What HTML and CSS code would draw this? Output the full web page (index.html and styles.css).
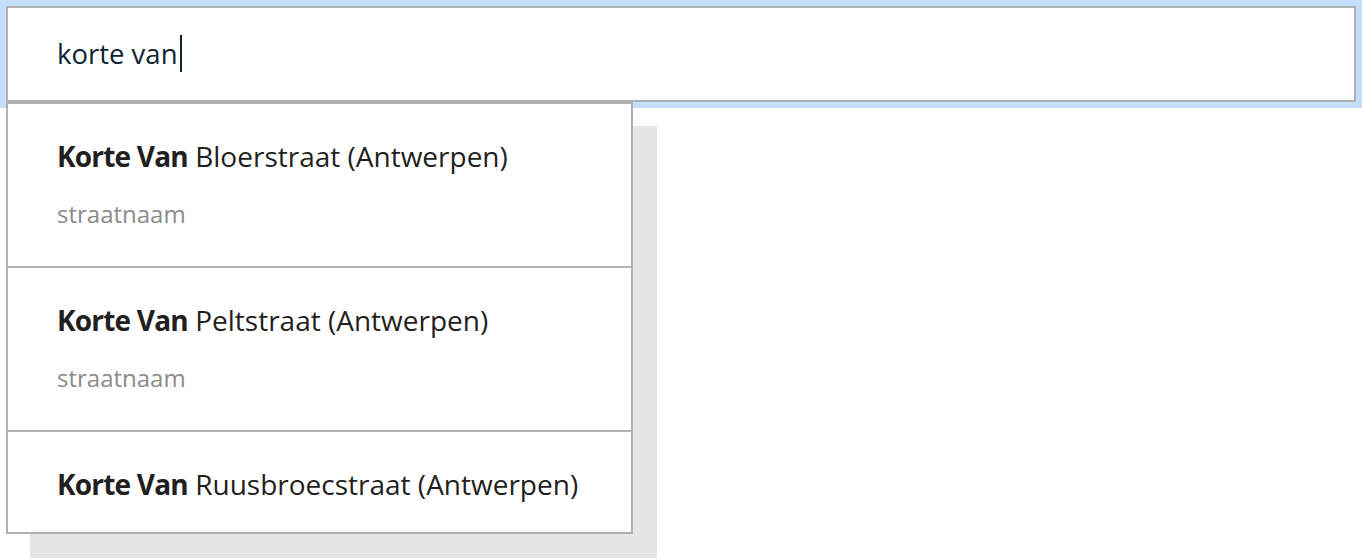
FILE: index.html
```html
<!DOCTYPE html>
<html lang="nl">
<head>
<meta charset="utf-8">
<title>Zoeken</title>
<link rel="stylesheet" href="styles.css">
</head>
<body>
<div class="page">
  <div class="search">
    <div class="field" role="textbox" aria-label="Zoek een straat">
      <span class="value">korte van</span><span class="caret"></span>
    </div>
    <ul class="suggestions" role="listbox">
      <li class="option">
        <div class="title"><strong>Korte Van</strong> Bloerstraat (Antwerpen)</div>
        <div class="type">straatnaam</div>
      </li>
      <li class="option">
        <div class="title"><strong>Korte Van</strong> Peltstraat (Antwerpen)</div>
        <div class="type">straatnaam</div>
      </li>
      <li class="option">
        <div class="title"><strong>Korte Van</strong> Ruusbroecstraat (Antwerpen)</div>
      </li>
    </ul>
  </div>
</div>
</body>
</html>
```
FILE: styles.css
```css
html, body {
  margin: 0;
  padding: 0;
  background: #ffffff;
}

body {
  font-family: "Open Sans", "Noto Sans", sans-serif;
  color: #231f20;
  min-height: 560px;
}

.page {
  padding: 6px;
}

.search {
  display: flex;
  flex-direction: column;
  align-items: flex-start;
}

.field {
  align-self: stretch;
  height: 96px;
  box-sizing: border-box;
  border: 2px solid #b0b0b0;
  box-shadow: 0 0 0 6px #c3dffb;
  background: #ffffff;
  padding: 0 49px 2px;
  display: flex;
  align-items: center;
  font-size: 27.5px;
  color: #0f2433;
}

.caret {
  display: inline-block;
  width: 2px;
  height: 37px;
  margin-left: 2px;
  background: #0f2433;
}

.suggestions {
  width: 627px;
  box-sizing: border-box;
  margin: 0;
  padding: 0;
  list-style: none;
  background: #ffffff;
  border: 2px solid #b0b0b0;
  box-shadow: 24px 24px 0 #e5e5e5;
}

.option {
  padding: 34px 49px 30px;
  border-top: 2px solid #b3b3b3;
}

.option:first-child {
  border-top: 0;
}

.title {
  font-size: 28px;
  line-height: 36px;
  color: #231f20;
  white-space: nowrap;
}

.title strong {
  font-weight: 700;
  letter-spacing: -0.8px;
}

.type {
  margin-top: 18px;
  font-size: 24px;
  line-height: 44px;
  color: #8c8c8c;
}
```
